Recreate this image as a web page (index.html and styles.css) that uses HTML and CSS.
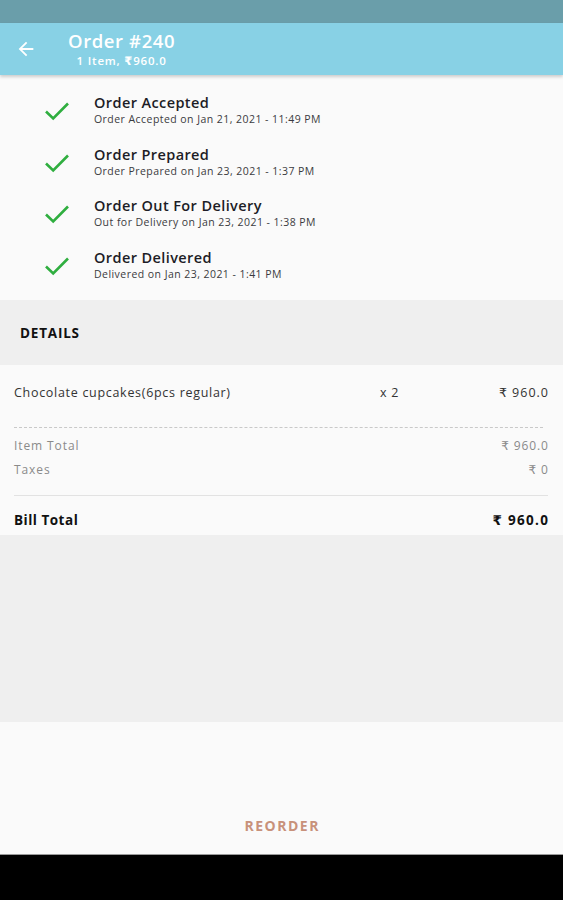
FILE: index.html
```html
<!DOCTYPE html>
<html lang="en">
<head>
<meta charset="utf-8">
<title>Order #240</title>
<link rel="stylesheet" href="styles.css">
</head>
<body>
<div class="screen">
  <div class="status-bar"></div>
  <header class="app-bar">
    <svg class="back" width="22" height="22" viewBox="0 0 24 24" aria-hidden="true">
      <path d="M20 11H7.83l5.59-5.59L12 4l-8 8 8 8 1.41-1.41L7.83 13H20v-2z" fill="#ffffff"/>
    </svg>
    <div class="titles">
      <div class="title">Order #240</div>
      <div class="subtitle">1 Item, ₹960.0</div>
    </div>
  </header>

  <section class="timeline">
    <div class="step">
      <svg class="check" width="26" height="20" viewBox="0 0 26 20" aria-hidden="true"><path d="M2 10.5l7.2 7L24 2.5" fill="none" stroke="#2fae3f" stroke-width="2.6"/></svg>
      <div class="step-text">
        <div class="step-title">Order Accepted</div>
        <div class="step-sub">Order Accepted on Jan 21, 2021 - 11:49 PM</div>
      </div>
    </div>
    <div class="step">
      <svg class="check" width="26" height="20" viewBox="0 0 26 20" aria-hidden="true"><path d="M2 10.5l7.2 7L24 2.5" fill="none" stroke="#2fae3f" stroke-width="2.6"/></svg>
      <div class="step-text">
        <div class="step-title">Order Prepared</div>
        <div class="step-sub">Order Prepared on Jan 23, 2021 - 1:37 PM</div>
      </div>
    </div>
    <div class="step">
      <svg class="check" width="26" height="20" viewBox="0 0 26 20" aria-hidden="true"><path d="M2 10.5l7.2 7L24 2.5" fill="none" stroke="#2fae3f" stroke-width="2.6"/></svg>
      <div class="step-text">
        <div class="step-title">Order Out For Delivery</div>
        <div class="step-sub">Out for Delivery on Jan 23, 2021 - 1:38 PM</div>
      </div>
    </div>
    <div class="step">
      <svg class="check" width="26" height="20" viewBox="0 0 26 20" aria-hidden="true"><path d="M2 10.5l7.2 7L24 2.5" fill="none" stroke="#2fae3f" stroke-width="2.6"/></svg>
      <div class="step-text">
        <div class="step-title">Order Delivered</div>
        <div class="step-sub">Delivered on Jan 23, 2021 - 1:41 PM</div>
      </div>
    </div>
  </section>

  <div class="details-header">DETAILS</div>

  <section class="bill">
    <div class="item-row">
      <span class="item-name">Chocolate cupcakes(6pcs regular)</span>
      <span class="item-right"><span class="qty">x 2</span><span class="price">₹ 960.0</span></span>
    </div>
    <div class="dashed"></div>
    <div class="sum-row"><span>Item Total</span><span>₹ 960.0</span></div>
    <div class="sum-row"><span>Taxes</span><span>₹ 0</span></div>
    <div class="solid"></div>
    <div class="total-row"><span>Bill Total</span><span>₹ 960.0</span></div>
  </section>

  <div class="filler"></div>

  <footer class="footer">
    <span class="reorder">REORDER</span>
  </footer>
  <div class="nav-bar"></div>
</div>
</body>
</html>
```

FILE: styles.css
```css
* { box-sizing: border-box; }
html, body { margin: 0; padding: 0; }
body {
  font-family: "Open Sans", "DejaVu Sans", "Noto Sans", sans-serif;
  background: #000;
}
.screen {
  width: 563px;
  height: 900px;
  display: flex;
  flex-direction: column;
  background: #fafafa;
}
.status-bar {
  height: 23px;
  background: #6a9eaa;
  flex: none;
}
.app-bar {
  height: 52px;
  flex: none;
  background: #88d1e5;
  display: flex;
  align-items: center;
  padding-left: 15px;
  box-shadow: 0 2px 3px rgba(0,0,0,0.18);
  position: relative;
  z-index: 1;
}
.back { flex: none; }
.titles {
  margin-left: 31px;
  display: flex;
  flex-direction: column;
  align-items: center;
  color: #fff;
}
.title {
  font-size: 18.5px;
  font-weight: 600;
  line-height: 22px;
  letter-spacing: 0.6px;
}
.subtitle {
  font-size: 11.5px;
  font-weight: 600;
  line-height: 17px;
  letter-spacing: 0.8px;
}
.timeline {
  flex: none;
  height: 225px;
  padding: 19px 0 0 44px;
  background: #fafafa;
}
.step {
  display: flex;
  align-items: center;
  height: 33px;
  margin-bottom: 18.5px;
}
.check { flex: none; margin-top: 1px; }
.step-text { margin-left: 24px; }
.step-title {
  font-size: 14.5px;
  font-weight: 600;
  color: #1d1d26;
  line-height: 18px;
  letter-spacing: 0.4px;
}
.step-sub {
  font-size: 10.5px;
  color: #3a3a40;
  line-height: 15px;
  letter-spacing: 0.45px;
}
.details-header {
  flex: none;
  height: 65px;
  background: #efefef;
  padding-left: 20px;
  display: flex;
  align-items: center;
  font-size: 13.5px;
  font-weight: 700;
  color: #111;
  letter-spacing: 0.8px;
}
.bill {
  flex: none;
  height: 170px;
  background: #fafafa;
  padding: 18px 15px 0 14px;
}
.item-row {
  display: grid;
  grid-template-columns: 1fr 168px;
  line-height: 20px;
  font-size: 12.5px;
  color: #333;
  letter-spacing: 0.7px;
}
.item-right {
  display: flex;
  justify-content: space-between;
}
.price { letter-spacing: 1px; margin-right: -1px; }
.dashed {
  border-top: 1px dashed #c9c9c9;
  margin: 24px 5px 0 0;
}
.sum-row {
  display: flex;
  justify-content: space-between;
  font-size: 12px;
  line-height: 20px;
  color: #8a8a8a;
  letter-spacing: 0.9px;
}
.sum-row span:last-child { margin-right: -0.9px; }
.dashed + .sum-row { margin-top: 8px; }
.sum-row + .sum-row { margin-top: 4px; }
.solid {
  border-top: 1px solid #e2e2e2;
  margin-top: 15px;
}
.total-row {
  display: flex;
  justify-content: space-between;
  margin-top: 14px;
  font-size: 13.5px;
  font-weight: 700;
  line-height: 20px;
  color: #111;
  letter-spacing: 0.5px;
}
.total-row span:last-child { letter-spacing: 1.3px; margin-right: -1.3px; }
.filler {
  flex: none;
  height: 187px;
  background: #efefef;
}
.footer {
  flex: none;
  height: 133px;
  background: #fafafa;
  display: flex;
  justify-content: center;
  align-items: flex-end;
  padding-bottom: 18px;
  border-bottom: 1px solid #9a9a9a;
}
.reorder {
  color: #c8917a;
  font-size: 14px;
  font-weight: 700;
  letter-spacing: 1.5px;
  line-height: 20px;
  margin-right: -1.5px;
}
.nav-bar {
  flex: 1;
  background: #000;
}
```
